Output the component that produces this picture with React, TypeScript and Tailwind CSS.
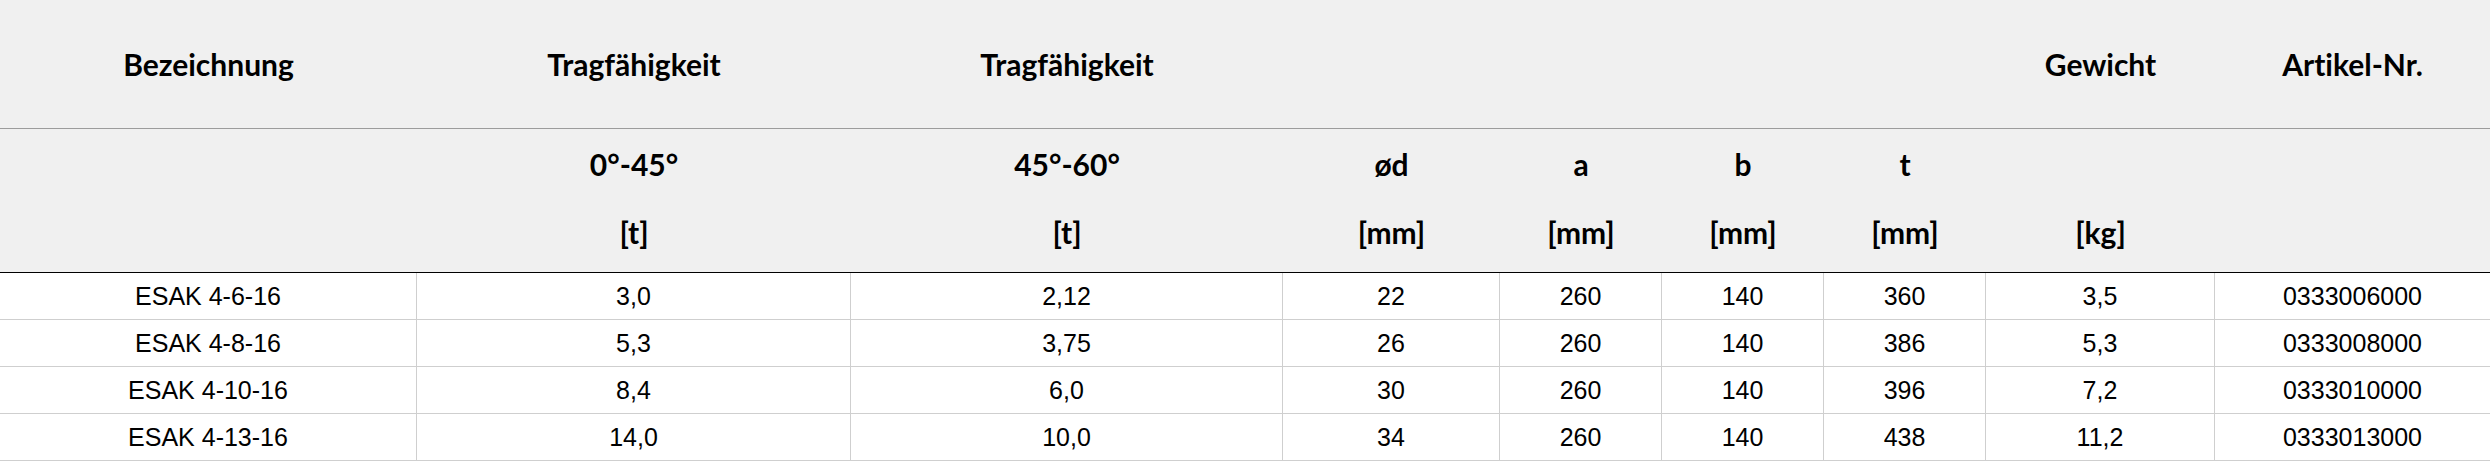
const widths = ['w-[417px]', 'w-[434px]', 'w-[432px]', 'w-[217px]', 'w-[162px]', 'w-[162px]', 'w-[162px]', 'w-[229px]', 'w-[275px]'];

const titles = ['Bezeichnung', 'Tragfähigkeit', 'Tragfähigkeit', '', '', '', '', 'Gewicht', 'Artikel-Nr.'];
const symbols = ['', '0°-45°', '45°-60°', 'ød', 'a', 'b', 't', '', ''];
const units = ['', '[t]', '[t]', '[mm]', '[mm]', '[mm]', '[mm]', '[kg]', ''];

const rows = [
  ['ESAK 4-6-16', '3,0', '2,12', '22', '260', '140', '360', '3,5', '0333006000'],
  ['ESAK 4-8-16', '5,3', '3,75', '26', '260', '140', '386', '5,3', '0333008000'],
  ['ESAK 4-10-16', '8,4', '6,0', '30', '260', '140', '396', '7,2', '0333010000'],
  ['ESAK 4-13-16', '14,0', '10,0', '34', '260', '140', '438', '11,2', '0333013000'],
];

export default function App() {
  return (
    <div className="w-[2490px] bg-white text-black">
      {/* Head: titles */}
      <div className="flex h-[129px] border-b border-[#9c9c9c] bg-[#f0f0f0] font-['Lato',sans-serif] text-[30px] font-bold [font-variant-ligatures:none]">
        {titles.map((t, i) => (
          <div key={i} className={`${widths[i]} flex items-center justify-center leading-none`}>
            {t}
          </div>
        ))}
      </div>

      {/* Head: symbols + units */}
      <div className="flex h-[144px] border-b border-black bg-[#f0f0f0] font-['Lato',sans-serif] text-[30px] font-bold">
        {symbols.map((s, i) => (
          <div key={i} className={`${widths[i]} flex flex-col`}>
            <div className="flex h-[70px] items-center justify-center leading-none">{s}</div>
            <div className="flex h-[66px] items-center justify-center leading-none">{units[i]}</div>
          </div>
        ))}
      </div>

      {/* Body */}
      {rows.map((row) => (
        <div key={row[0]} className="flex h-[47px] border-b border-[#cfcfcf] font-['Liberation_Sans',Arial,sans-serif] text-[25px]">
          {row.map((cell, i) => (
            <div
              key={i}
              className={`${widths[i]} flex items-center justify-center leading-none ${i < row.length - 1 ? 'border-r border-[#cfcfcf]' : ''}`}
            >
              {cell}
            </div>
          ))}
        </div>
      ))}
    </div>
  );
}
